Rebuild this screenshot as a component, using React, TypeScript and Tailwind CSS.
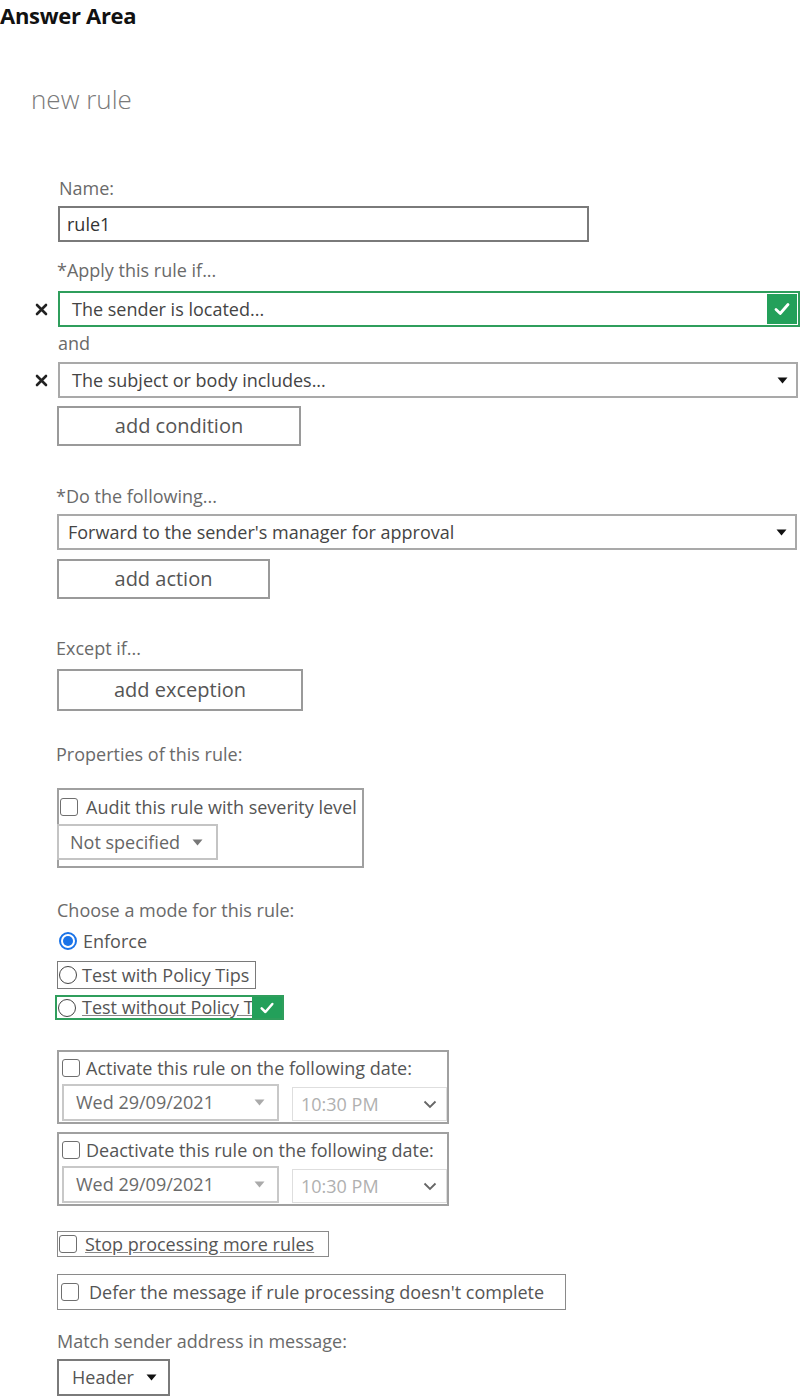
import React from "react";

const F = "font-[family-name:'Open_Sans','Noto_Sans',sans-serif]";

function XMark() {
  return (
    <svg width="13" height="13" viewBox="0 0 13 13" className="shrink-0">
      <path d="M2 2 L11 11 M11 2 L2 11" stroke="#222" strokeWidth="2.6" strokeLinecap="round" />
    </svg>
  );
}

function Check({ size = 18 }: { size?: number }) {
  return (
    <svg width={size} height={size} viewBox="0 0 18 18">
      <path d="M3 9.5 L7.2 13.5 L15 4.5" stroke="#fff" strokeWidth="2.8" fill="none" strokeLinecap="round" strokeLinejoin="round" />
    </svg>
  );
}

function Caret({ color = "#111" }: { color?: string }) {
  return (
    <svg width="11" height="7" viewBox="0 0 11 7" className="shrink-0">
      <path d="M0.5 0.5 L10.5 0.5 L5.5 6.5 Z" fill={color} />
    </svg>
  );
}

function Chevron() {
  return (
    <svg width="14" height="9" viewBox="0 0 14 9" className="shrink-0">
      <path d="M1.5 1.5 L7 7 L12.5 1.5" stroke="#666" strokeWidth="1.8" fill="none" />
    </svg>
  );
}

function Box() {
  return <span className="inline-block h-[18px] w-[18px] shrink-0 rounded-[3px] border-[1.5px] border-[#6f6f6f] bg-white" />;
}

function Radio({ on = false }: { on?: boolean }) {
  return on ? (
    <span className="flex h-[18px] w-[18px] shrink-0 items-center justify-center rounded-full border-2 border-[#1a73e8] bg-white">
      <span className="h-[10px] w-[10px] rounded-full bg-[#1a73e8]" />
    </span>
  ) : (
    <span className="inline-block h-[18px] w-[18px] shrink-0 rounded-full border-[1.5px] border-[#444] bg-white" />
  );
}

function Label({ children, className = "" }: { children: React.ReactNode; className?: string }) {
  return <div className={`h-[24px] text-[18px] leading-[24px] text-[#6a6a6a] ${className}`}>{children}</div>;
}

function Button({ children, w, h = 40 }: { children: React.ReactNode; w: number; h?: number }) {
  return (
    <div
      className="ml-[57px] flex items-center justify-center border-2 border-[#9a9a9a] bg-white text-[20px] text-[#555]"
      style={{ width: w, height: h }}
    >
      {children}
    </div>
  );
}

export default function App() {
  return (
    <div className={`${F} relative h-[1396px] w-[801px] overflow-hidden bg-white text-[#333]`}>
      <div className="h-[30px] text-[22px] font-bold leading-[30px] tracking-[-0.3px] text-[#111]">Answer Area</div>

      <div className="ml-[31px] mt-[52px] h-[34px] text-[26px] font-light leading-[34px] text-[#7a7a7a]">new rule</div>

      <Label className="ml-[59px] mt-[60px]">Name:</Label>
      <div className="ml-[58px] mt-[6px] flex h-[36px] w-[531px] items-center border-2 border-[#7a7a7a] pl-[7px] text-[18px] text-[#333]">
        rule1
      </div>

      <Label className="ml-[57px] mt-[16px]">*Apply this rule if...</Label>
      <div className="mt-[9px] flex h-[36px] items-center">
        <div className="ml-[35px] w-[23px]">
          <XMark />
        </div>
        <div className="flex h-[36px] flex-1 items-center justify-between border-2 border-[#2f9e5c] pl-[12px] text-[18px] text-[#444]">
          The sender is located...
          <div className="mr-[1px] flex h-[30px] w-[30px] items-center justify-center bg-[#23a05a]">
            <Check />
          </div>
        </div>
        <div className="w-px" />
      </div>

      <Label className="ml-[58px] mt-[4px]">and</Label>
      <div className="mt-[7px] flex h-[36px] items-center">
        <div className="ml-[35px] w-[23px]">
          <XMark />
        </div>
        <div className="flex h-[36px] w-[740px] items-center justify-between border-2 border-[#a9a9a9] pl-[12px] pr-[8px] text-[18px] text-[#444]">
          The subject or body includes...
          <Caret />
        </div>
      </div>

      <div className="mt-[8px]" />
      <Button w={244}>add condition</Button>

      <Label className="ml-[56px] mt-[38px]">*Do the following...</Label>
      <div className="ml-[57px] mt-[6px] flex h-[36px] w-[740px] items-center justify-between border-2 border-[#a9a9a9] pl-[9px] pr-[8px] text-[18px] text-[#444]">
        Forward to the sender's manager for approval
        <Caret />
      </div>
      <div className="mt-[9px]" />
      <Button w={213}>add action</Button>

      <Label className="ml-[56px] mt-[37px]">Except if...</Label>
      <div className="mt-[9px]" />
      <Button w={246} h={42}>add exception</Button>

      <Label className="ml-[56px] mt-[31px]">Properties of this rule:</Label>
      <div className="ml-[57px] mt-[22px] h-[80px] w-[307px] border-2 border-[#a0a0a0]">
        <div className="flex h-[34px] items-center gap-[8px] pl-[1px] text-[18px] text-[#555]">
          <Box />
          <span className="whitespace-nowrap">Audit this rule with severity level</span>
        </div>
        <div className="-ml-[2px] flex h-[36px] w-[161px] items-center gap-[12px] border-2 border-[#c4c4c4] pl-[11px] text-[18px] text-[#666]">
          Not specified
          <Caret color="#777" />
        </div>
      </div>

      <Label className="ml-[57px] mt-[30px]">Choose a mode for this rule:</Label>
      <div className="ml-[59px] mt-[7px] flex h-[24px] items-center gap-[6px] text-[18px] text-[#555]">
        <Radio on />
        Enforce
      </div>
      <div className="ml-[57px] mt-[8px] flex h-[28px] w-[199px] items-center gap-[5px] overflow-hidden border-[1.5px] border-[#7a7a7a] pl-[1px] text-[18px] text-[#555]">
        <Radio />
        <span className="whitespace-nowrap">Test with Policy Tips</span>
      </div>
      <div className="ml-[55px] mt-[6px] flex h-[25px] w-[229px] items-center border-2 border-[#2f9e5c] text-[18px] text-[#555]">
        <div className="flex flex-1 items-center gap-[6px] overflow-hidden pl-[1px]">
          <Radio />
          <span className="whitespace-nowrap underline decoration-[#888]">Test without Policy T</span>
        </div>
        <div className="flex h-[21px] w-[30px] shrink-0 items-center justify-center bg-[#23a05a]">
          <Check size={16} />
        </div>
      </div>

      <DateBox label="Activate this rule on the following date:" mt={30} />
      <DateBox label="Deactivate this rule on the following date:" mt={8} />

      <div className="ml-[57px] mt-[25px] flex h-[26px] w-[272px] items-center gap-[8px] border-[1.5px] border-[#8a8a8a] pl-[1px] text-[18px] text-[#555]">
        <Box />
        <span className="whitespace-nowrap underline decoration-[#888]">Stop processing more rules</span>
      </div>

      <div className="ml-[57px] mt-[17px] flex h-[36px] w-[509px] items-center gap-[10px] border-[1.5px] border-[#8a8a8a] pl-[3px] text-[18px] text-[#555]">
        <Box />
        <span className="whitespace-nowrap">Defer the message if rule processing doesn't complete</span>
      </div>

      <Label className="ml-[57px] mt-[19px]">Match sender address in message:</Label>
      <div className="ml-[57px] mt-[6px] flex h-[37px] w-[113px] items-center gap-[12px] border-2 border-[#7a7a7a] pl-[13px] text-[18px] text-[#555]">
        Header
        <Caret />
      </div>
    </div>
  );
}

function DateBox({ label, mt }: { label: string; mt: number }) {
  return (
    <div className="ml-[57px] w-[392px] border-2 border-[#a0a0a0]" style={{ marginTop: mt, height: 74 }}>
      <div className="flex h-[32px] items-center gap-[6px] pl-[3px] text-[18px] text-[#555]">
        <Box />
        <span className="whitespace-nowrap">{label}</span>
      </div>
      <div className="flex items-start gap-[13px] pl-[3px]">
        <div className="flex h-[37px] w-[217px] items-center justify-between border-2 border-[#c8c8c8] pl-[12px] pr-[12px] text-[18px] text-[#6a6a6a]">
          Wed 29/09/2021
          <Caret color="#aaa" />
        </div>
        <div className="mt-[3px] flex h-[34px] w-[155px] items-center justify-between border-[1.5px] border-[#dedede] pl-[8px] pr-[9px] text-[18px] text-[#b0b0b0]">
          10:30 PM
          <Chevron />
        </div>
      </div>
    </div>
  );
}
